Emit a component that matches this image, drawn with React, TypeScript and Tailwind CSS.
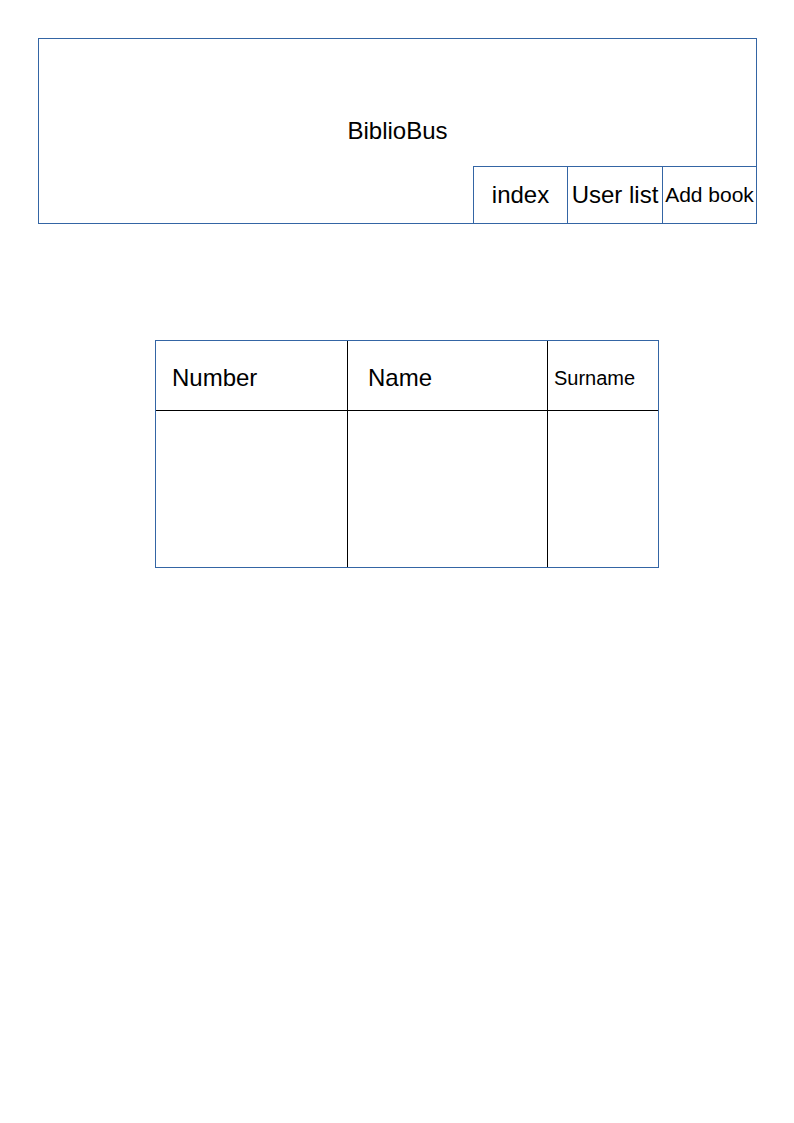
const links = [
  { label: 'index', href: '#index', style: 'w-[94px] text-2xl' },
  { label: 'User list', href: '#users', style: 'w-[95px] text-2xl' },
  { label: 'Add book', href: '#add-book', style: 'w-[94px] text-[21px]' },
];

function Header() {
  return (
    <header className="grid min-h-[186px] border border-[#3465a4]">
      <h1 className="col-start-1 row-start-1 place-self-center text-2xl">BiblioBus</h1>
      <nav className="col-start-1 row-start-1 flex h-[57px] self-end justify-self-end border-t border-[#3465a4]">
        {links.map((link) => (
          <a
            key={link.href}
            href={link.href}
            className={`flex items-center justify-center border-l border-[#3465a4] whitespace-nowrap ${link.style}`}
          >
            {link.label}
          </a>
        ))}
      </nav>
    </header>
  );
}

function UserTable() {
  return (
    <table className="w-full table-fixed border-separate border-spacing-0 border border-[#3465a4] text-left">
      <thead>
        <tr className="h-[70px]">
          <th scope="col" className="w-[192px] border-r border-b border-black px-4 pt-1 pb-0 text-2xl font-normal">
            Number
          </th>
          <th scope="col" className="w-[200px] border-r border-b border-black px-5 pt-1 pb-0 text-2xl font-normal">
            Name
          </th>
          <th scope="col" className="border-b border-black px-1.5 pt-1 pb-0 text-xl font-normal">
            Surname
          </th>
        </tr>
      </thead>
      <tbody>
        <tr className="h-[156px]">
          <td className="border-r border-black" />
          <td className="border-r border-black" />
          <td />
        </tr>
      </tbody>
    </table>
  );
}

export default function App() {
  return (
    <div className="min-h-screen bg-white pt-[38px] pr-[37px] pb-10 pl-[38px] font-['Liberation_Sans',Arial,sans-serif] text-black">
      <Header />
      <main className="mt-[116px] pr-[98px] pl-[117px]">
        <UserTable />
      </main>
    </div>
  );
}
